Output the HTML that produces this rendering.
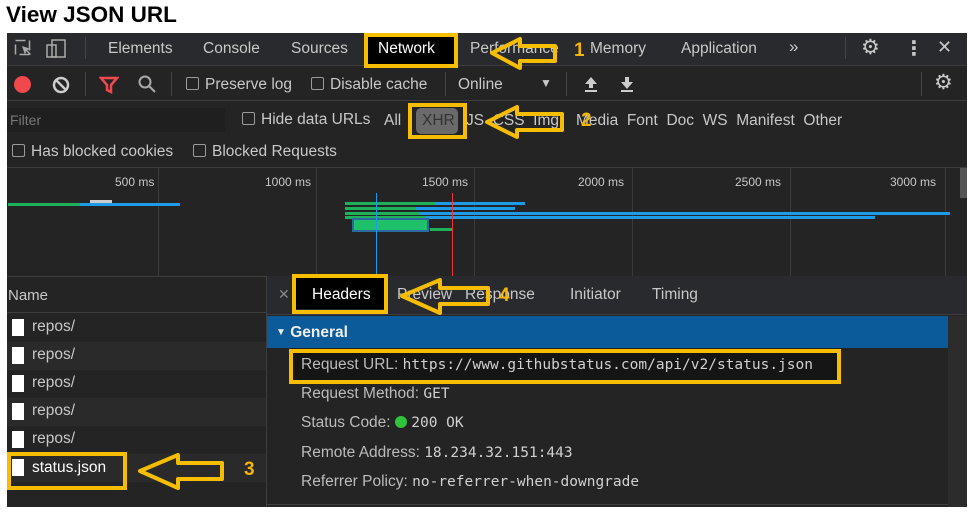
<!DOCTYPE html>
<html><head><meta charset="utf-8"><style>
*{margin:0;padding:0;box-sizing:border-box}
body{width:972px;height:515px;background:#fff;position:relative;overflow:hidden;font-family:"Liberation Sans","DejaVu Sans",sans-serif;}
.a{position:absolute;white-space:nowrap}
.t{color:#c8c8c8;font-size:15.5px}
.m{font-family:"DejaVu Sans Mono","Liberation Mono",monospace;font-size:14.5px;color:#d0d0d0}
.y{border:4px solid #f7bd00;position:absolute}
.cb{display:inline-block;width:13px;height:13px;border:1px solid #9a9a9a;border-radius:2px;vertical-align:-1px;margin-right:6px}
.n{color:#f5b400;font-weight:bold;font-size:19px;position:absolute}
.doc{position:absolute;left:12px;width:12px;height:17px;background:#fff}
</style></head><body>
<div class="a" style="left:6px;top:2px;font-size:22.5px;font-weight:bold;color:#000">View JSON URL</div>
<div class="a" style="left:7px;top:33px;width:960px;height:474px;background:#242424"></div>
<!-- tab bar -->
<div class="a" style="left:7px;top:33px;width:960px;height:33px;background:#292a2d;border-bottom:1px solid #3d3d3d"></div>
<svg class="a" style="left:14px;top:38px" width="60" height="22"><rect x="1.5" y="2.5" width="14" height="14" fill="none" stroke="#aaa" stroke-width="1.5" stroke-dasharray="10 4"/><path d="M8 8l9 3-4 1 4 4-1 1-4-4-1 4z" fill="#aaa"/><rect x="33" y="7" width="9" height="12" fill="none" stroke="#aaa" stroke-width="1.5"/><rect x="38" y="2" width="13" height="17" fill="none" stroke="#aaa" stroke-width="1.5"/></svg>
<div class="a" style="left:85px;top:37px;width:1px;height:22px;background:#444"></div>
<div class="a t" style="left:108px;top:40px">Elements</div>
<div class="a t" style="left:203px;top:40px">Console</div>
<div class="a t" style="left:291px;top:40px">Sources</div>
<div class="a" style="left:366px;top:36px;width:90px;height:30px;background:#000"></div>
<div class="a t" style="left:378px;top:40px;color:#fff">Network</div>
<div class="a t" style="left:470px;top:40px">Performance</div>
<div class="a t" style="left:590px;top:40px">Memory</div>
<div class="a t" style="left:681px;top:40px">Application</div>
<div class="a t" style="left:789px;top:37px;font-size:17px">»</div>
<div class="a" style="left:845px;top:37px;width:1px;height:22px;background:#444"></div>
<div class="a t" style="left:861px;top:35px;font-size:21px">⚙</div>
<div class="a t" style="left:904px;top:36px;font-size:20px;font-weight:bold">⋮</div>
<div class="a t" style="left:937px;top:37px;font-size:18px">✕</div>
<!-- toolbar -->
<div class="a" style="left:7px;top:67px;width:960px;height:34px;border-bottom:1px solid #3d3d3d"></div>
<div class="a" style="left:14px;top:76px;width:17px;height:17px;border-radius:50%;background:#f1484e"></div>
<svg class="a" style="left:51px;top:75px" width="20" height="20"><circle cx="10" cy="10" r="7" fill="none" stroke="#ccc" stroke-width="2.5"/><path d="M5 5l10 10" stroke="#ccc" stroke-width="2.5"/></svg>
<div class="a" style="left:85px;top:72px;width:1px;height:24px;background:#444"></div>
<svg class="a" style="left:99px;top:75px" width="20" height="20"><path d="M2 3h16l-6 7v7l-4-2v-5z" fill="none" stroke="#f1484e" stroke-width="2.5"/></svg>
<svg class="a" style="left:137px;top:74px" width="20" height="20"><circle cx="8" cy="8" r="5.5" fill="none" stroke="#aaa" stroke-width="2"/><path d="M12 12l6 6" stroke="#aaa" stroke-width="2"/></svg>
<div class="a" style="left:171px;top:72px;width:1px;height:24px;background:#444"></div>
<div class="a t" style="left:186px;top:76px"><span class="cb"></span>Preserve log</div>
<div class="a t" style="left:311px;top:76px"><span class="cb"></span>Disable cache</div>
<div class="a" style="left:445px;top:72px;width:1px;height:24px;background:#444"></div>
<div class="a t" style="left:458px;top:76px">Online</div>
<div class="a t" style="left:540px;top:76px;font-size:12px">▼</div>
<div class="a" style="left:566px;top:72px;width:1px;height:24px;background:#444"></div>
<svg class="a" style="left:582px;top:74px" width="60" height="20"><path d="M9 3l6 7h-4v4H7v-4H3z" fill="#ccc"/><rect x="3" y="16" width="12" height="2" fill="#ccc"/><path d="M45 15l6-7h-4V3h-4v5h-4z" fill="#ccc"/><rect x="39" y="16" width="12" height="2" fill="#ccc"/></svg>
<div class="a" style="left:921px;top:72px;width:1px;height:24px;background:#444"></div>
<div class="a t" style="left:934px;top:70px;font-size:21px">⚙</div>
<!-- filter row -->
<div class="a" style="left:7px;top:108px;width:218px;height:24px;background:#1f1f1f"></div>
<div class="a t" style="left:10px;top:112px;color:#777;font-size:14px">Filter</div>
<div class="a t" style="left:242px;top:111px"><span class="cb"></span>Hide data URLs</div>
<div class="a t" style="left:384px;top:112px">All</div>
<div class="a" style="left:416px;top:108px;width:42px;height:26px;background:#6a6a6a;border-radius:5px"></div>
<div class="a t" style="left:422px;top:112px;color:#333">XHR</div>
<div class="a t" style="left:466px;top:112px">JS&nbsp;&nbsp;CSS&nbsp;&nbsp;Img</div>
<div class="a t" style="left:576px;top:112px">Media&nbsp;&nbsp;Font&nbsp;&nbsp;Doc&nbsp;&nbsp;WS&nbsp;&nbsp;Manifest&nbsp;&nbsp;Other</div>
<div class="a t" style="left:12px;top:143px"><span class="cb"></span>Has blocked cookies</div>
<div class="a t" style="left:193px;top:143px"><span class="cb"></span>Blocked Requests</div>
<!-- timeline -->
<div class="a" style="left:7px;top:167px;width:960px;height:1px;background:#3d3d3d"></div>
<div class="a" style="left:158px;top:168px;width:1px;height:108px;background:#3a3a3a"></div>
<div class="a" style="left:316px;top:168px;width:1px;height:108px;background:#3a3a3a"></div>
<div class="a" style="left:474px;top:168px;width:1px;height:108px;background:#3a3a3a"></div>
<div class="a" style="left:632px;top:168px;width:1px;height:108px;background:#3a3a3a"></div>
<div class="a" style="left:790px;top:168px;width:1px;height:108px;background:#3a3a3a"></div>
<div class="a" style="left:945px;top:168px;width:1px;height:108px;background:#3a3a3a"></div>
<div class="a t" style="left:115px;top:175px;font-size:12px">500 ms</div>
<div class="a t" style="left:265px;top:175px;font-size:12px">1000 ms</div>
<div class="a t" style="left:422px;top:175px;font-size:12px">1500 ms</div>
<div class="a t" style="left:578px;top:175px;font-size:12px">2000 ms</div>
<div class="a t" style="left:735px;top:175px;font-size:12px">2500 ms</div>
<div class="a t" style="left:890px;top:175px;font-size:12px">3000 ms</div>
<svg class="a" style="left:0;top:165px" width="972" height="112">
<rect x="90" y="35" width="22" height="3" fill="#ccc"/>
<rect x="8" y="38" width="72" height="3" fill="#1fb05a"/><rect x="80" y="38" width="100" height="3" fill="#1e9be8"/>
<rect x="345" y="37" width="90" height="3" fill="#1fb05a"/><rect x="435" y="37" width="90" height="3" fill="#1e9be8"/>
<rect x="345" y="42" width="70" height="3" fill="#1fb05a"/><rect x="415" y="42" width="100" height="3" fill="#1e9be8"/>
<rect x="345" y="47" width="75" height="3" fill="#1fb05a"/><rect x="420" y="47" width="530" height="3" fill="#1e9be8"/>
<rect x="345" y="51" width="80" height="3" fill="#1fb05a"/><rect x="425" y="51" width="450" height="3" fill="#1e9be8"/>
<rect x="353" y="54" width="75" height="12" fill="#1fc06a" stroke="#2a6aa0" stroke-width="2"/>
<rect x="430" y="63" width="22" height="3" fill="#1fb05a"/>
<rect x="376" y="28" width="1" height="84" fill="#1e9be8"/>
<rect x="452" y="28" width="1" height="84" fill="#e33"/>
</svg>
<div class="a" style="left:960px;top:168px;width:7px;height:30px;background:#555"></div>
<!-- bottom panel -->
<div class="a" style="left:7px;top:276px;width:960px;height:1px;background:#3d3d3d"></div>
<div class="a" style="left:266px;top:276px;width:1px;height:231px;background:#3d3d3d"></div>
<div class="a t" style="left:8px;top:287px;font-size:15px">Name</div>
<div class="a" style="left:7px;top:312px;width:259px;height:1px;background:#3d3d3d"></div>
<div class="a" style="left:7px;top:342px;width:259px;height:28px;background:#2a2a2a"></div>
<div class="a" style="left:7px;top:398px;width:259px;height:28px;background:#2a2a2a"></div>
<div class="a" style="left:7px;top:454px;width:259px;height:28px;background:#2a2a2a"></div>
<div class="doc" style="top:319px"></div><div class="a t" style="left:32px;top:318px">repos/</div>
<div class="doc" style="top:347px"></div><div class="a t" style="left:32px;top:346px">repos/</div>
<div class="doc" style="top:375px"></div><div class="a t" style="left:32px;top:374px">repos/</div>
<div class="doc" style="top:403px"></div><div class="a t" style="left:32px;top:402px">repos/</div>
<div class="doc" style="top:431px"></div><div class="a t" style="left:32px;top:430px">repos/</div>
<div class="doc" style="top:459px"></div><div class="a t" style="left:32px;top:459px;color:#fff">status.json</div>
<!-- details -->
<div class="a" style="left:267px;top:276px;width:700px;height:39px;background:#292a2d;border-bottom:1px solid #3d3d3d"></div>
<div class="a t" style="left:278px;top:286px;color:#888;font-size:14px">✕</div>
<div class="a" style="left:296px;top:278px;width:88px;height:31px;background:#000"></div>
<div class="a t" style="left:312px;top:286px;color:#fff">Headers</div>
<div class="a t" style="left:397px;top:286px">Preview&nbsp;&nbsp;&nbsp;Response</div>
<div class="a t" style="left:570px;top:286px">Initiator</div>
<div class="a t" style="left:652px;top:286px">Timing</div>
<div class="a" style="left:267px;top:316px;width:681px;height:32px;background:#0b5a99"></div>
<div class="a t" style="left:276px;top:324px;color:#eee;font-weight:bold"><span style="font-size:10px;vertical-align:2px">▼</span> General</div>
<div class="a" style="left:948px;top:316px;width:19px;height:191px;background:#2c2c2c"></div>
<div class="a" style="left:267px;top:504px;width:681px;height:1px;background:#3d3d3d"></div>
<div class="a" style="left:292px;top:352px;width:545px;height:29px;background:#151515"></div>
<div class="a t" style="left:301px;top:356px;color:#bbb">Request URL: <span class="m">https://www.githubstatus.com/api/v2/status.json</span></div>
<div class="a t" style="left:301px;top:385px;color:#bbb">Request Method: <span class="m">GET</span></div>
<div class="a t" style="left:301px;top:414px;color:#bbb">Status Code: <span style="display:inline-block;width:12px;height:12px;border-radius:50%;background:#2fc43a;vertical-align:-1px"></span> <span class="m">200 OK</span></div>
<div class="a t" style="left:301px;top:444px;color:#bbb">Remote Address: <span class="m">18.234.32.151:443</span></div>
<div class="a t" style="left:301px;top:473px;color:#bbb">Referrer Policy: <span class="m">no-referrer-when-downgrade</span></div>
<!-- bottom white -->
<div class="a" style="left:0;top:507px;width:972px;height:8px;background:#fff"></div>
<!-- annotations -->
<div class="y" style="left:364px;top:33px;width:94px;height:35px"></div>
<div class="y" style="left:408px;top:103px;width:59px;height:36px"></div>
<div class="y" style="left:292px;top:274px;width:96px;height:40px"></div>
<div class="y" style="left:289px;top:349px;width:552px;height:35px"></div>
<div class="y" style="left:7px;top:452px;width:120px;height:38px"></div>
<svg class="a" style="left:0;top:0" width="972" height="515">
<g fill="none" stroke="#f7bd00" stroke-width="4" stroke-linejoin="round">
<path d="M492 53L520 39V46H555V61H520V68Z"/>
<path d="M487 122L517 107V114H562V130H517V137Z"/>
<path d="M140 471L178 455V463H222V479H178V488Z"/>
<path d="M402 296L440 280V288H488V304H440V313Z"/>
</g></svg>
<div class="n" style="left:574px;top:40px">1</div>
<div class="n" style="left:581px;top:110px">2</div>
<div class="n" style="left:244px;top:459px">3</div>
<div class="n" style="left:499px;top:285px">4</div>
</body></html>
